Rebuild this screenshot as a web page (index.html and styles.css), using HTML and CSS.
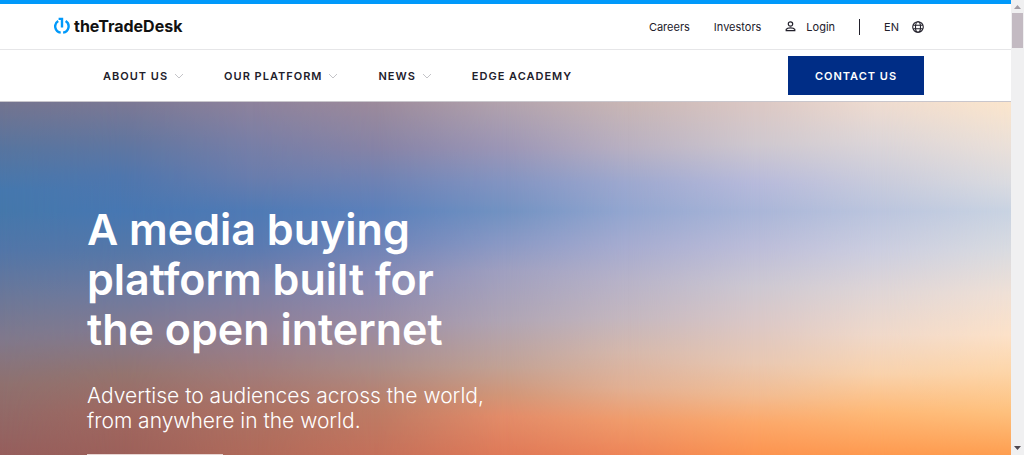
FILE: index.html
```html
<!DOCTYPE html>
<html lang="en">

<head>
    <meta charset="UTF-8">
    <meta name="viewport" content="width=device-width, initial-scale=1.0">
    <title>The Trade Desk</title>
    <link rel="stylesheet" href="styles.css">
</head>

<body>
    <div class="page">
        <header>
            <div class="top-bar">
                <a href="#" class="logo">
                    <svg width="16" height="18" viewBox="0 0 16 18" fill="none" stroke="#0099fa" stroke-width="2.4">
                        <path d="M4.2 4A6.3 6.3 0 0 0 6.7 15.6"/>
                        <path d="M11.6 4A6.3 6.3 0 0 1 9.1 15.6"/>
                        <path d="M4.6 1.9H8V10.6"/>
                    </svg>
                    <span>theTradeDesk</span>
                </a>
                <div class="top-links">
                    <a href="#">Careers</a>
                    <a href="#">Investors</a>
                    <a href="#" class="login">
                        <svg width="11" height="11" viewBox="0 0 11 11" fill="none" stroke="#22202b" stroke-width="1.2">
                            <circle cx="5.5" cy="3" r="2.2"/>
                            <path d="M1.2 9.6V8.4C2.4 6.3 8.6 6.3 9.8 8.4V9.6Z"/>
                        </svg>
                        Login
                    </a>
                    <span class="divider"></span>
                    <a href="#" class="lang">
                        EN
                        <svg width="12" height="12" viewBox="0 0 12 12" fill="none" stroke="#22202b" stroke-width="1.1">
                            <circle cx="6" cy="6" r="5.3"/>
                            <ellipse cx="6" cy="6" rx="2.5" ry="5.3"/>
                            <path d="M1.2 4.2H10.8M1.2 7.8H10.8"/>
                        </svg>
                    </a>
                </div>
            </div>
            <div class="main-bar">
                <nav>
                    <a href="#">ABOUT US <svg width="10" height="6" viewBox="0 0 10 6"><path d="M1 1L5 5L9 1"/></svg></a>
                    <a href="#">OUR PLATFORM <svg width="10" height="6" viewBox="0 0 10 6"><path d="M1 1L5 5L9 1"/></svg></a>
                    <a href="#">NEWS <svg width="10" height="6" viewBox="0 0 10 6"><path d="M1 1L5 5L9 1"/></svg></a>
                    <a href="#">EDGE ACADEMY</a>
                </nav>
                <button class="contact">CONTACT US</button>
            </div>
        </header>

        <main class="hero">
            <!-- sunset sky, each layer fades in over the one before it -->
            <div class="sky sky-1"></div>
            <div class="sky sky-2"></div>
            <div class="sky sky-3"></div>
            <div class="sky sky-4"></div>
            <div class="sky sky-5"></div>
            <div class="sky sky-6"></div>
            <div class="sky sky-7"></div>
            <div class="sky sky-8"></div>
            <div class="sky sky-9"></div>
            <div class="hero-text">
                <h1>A media buying<br>platform built for<br>the open internet</h1>
                <p>Advertise to audiences across the world,<br>from anywhere in the world.</p>
                <button class="hero-btn" aria-label="Contact us"></button>
            </div>
        </main>
    </div>

    <div class="scrollbar">
        <svg width="7" height="4" viewBox="0 0 7 4"><path d="M0 4L3.5 0L7 4Z" fill="#a39da5"/></svg>
        <div class="thumb"></div>
        <svg width="7" height="4" viewBox="0 0 7 4"><path d="M0 0L3.5 4L7 0Z" fill="#4d4851"/></svg>
    </div>
</body>
</html>
```

FILE: styles.css
```css
* {
    box-sizing: border-box;
}

body {
    margin: 0;
    display: flex;
    height: 100vh;
    overflow: hidden;
    font-family: Inter, "Liberation Sans", sans-serif;
    color: #22202b;
}

a {
    color: inherit;
    text-decoration: none;
}

.page {
    flex: 1;
    display: flex;
    flex-direction: column;
    overflow: hidden;
}

/* header */
.top-bar {
    display: flex;
    justify-content: space-between;
    align-items: center;
    height: 50px;
    padding: 0 87px 2px 54px;
    border-top: 4px solid #0099fa;
    border-bottom: 1px solid #e6e6e8;
}

.logo {
    display: flex;
    align-items: center;
    gap: 4px;
    font-size: 16px;
    font-weight: 700;
    color: #111;
}

.top-links {
    display: flex;
    align-items: center;
    gap: 24px;
    padding-top: 2px;
    font-size: 11px;
}

.login {
    display: flex;
    align-items: center;
    gap: 10px;
}

.lang {
    display: flex;
    align-items: center;
    gap: 13px;
}

.divider {
    width: 1px;
    height: 16px;
    background-color: #22202b;
}

.main-bar {
    display: flex;
    justify-content: space-between;
    align-items: center;
    height: 52px;
    padding: 0 87px 0 103px;
    border-bottom: 1px solid #c9c6cc;
}

nav {
    display: flex;
    gap: 40px;
    font-size: 11px;
    font-weight: 600;
    letter-spacing: 1px;
}

nav a {
    display: flex;
    align-items: center;
    gap: 6px;
}

nav svg {
    fill: none;
    stroke: #c4c4c8;
}

.contact {
    width: 136px;
    height: 39px;
    padding: 0;
    border: 0;
    background-color: #002d86;
    color: #fff;
    font-family: inherit;
    font-size: 11px;
    font-weight: 600;
    letter-spacing: 1px;
}

/* hero */
.hero {
    flex: 1;
    position: relative;
    overflow: hidden;
}

.sky {
    position: absolute;
    inset: 0;
}

.sky-1 {
    background: linear-gradient(#74748f 0, #58759f 13%, #4578ae 25%, #4578ab 31%, #5276a8 42%, #6d7898 56%, #80798c 67%, #8f716f 80%, #965e5c 100%);
}

.sky-2 {
    background: linear-gradient(#7b7894 0, #62769f 11%, #4f76ad 21%, #4777b2 31%, #5577a8 42%, #6e7a9f 54%, #827a90 65%, #94746f 77%, #a06860 88%, #9c605a 100%);
    mask-image: linear-gradient(90deg, transparent 0, #000 12%);
}

.sky-3 {
    background: linear-gradient(#8e829c 0, #7a7fa6 11%, #6a7dad 21%, #4f7ab5 31%, #5a7ab1 41%, #7a7fa6 52%, #927f95 65%, #a07c7c 76%, #ac7264 87%, #b06a5a 100%);
    mask-image: linear-gradient(90deg, transparent 12%, #000 25%);
}

.sky-4 {
    background: linear-gradient(#9c8a9b 0, #8683a6 13%, #6f82b3 22%, #5b80bb 31%, #6c83b8 40%, #8789b3 50%, #9a8ca4 63%, #aa8c88 75%, #bc7c66 87%, #c4705a 100%);
    mask-image: linear-gradient(90deg, transparent 25%, #000 37%);
}

.sky-5 {
    background: linear-gradient(#b3a3ad 0, #9c96b6 13%, #8294c2 23%, #7292c2 31%, #8a99c5 40%, #a0a0c0 48%, #b0a5b4 62%, #c2a295 75%, #d29678 83%, #e38c69 89%, #e07a58 100%);
    mask-image: linear-gradient(90deg, transparent 37%, #000 50%);
}

.sky-6 {
    background: linear-gradient(#c9b6b4 0, #b8b0c2 13%, #9da8cf 23%, #93a6d0 31%, #a7acd0 41%, #b8b3c8 51%, #c4b7bf 61%, #d6b8ab 71%, #e2b093 81%, #f09c6c 90%, #ee8558 100%);
    mask-image: linear-gradient(90deg, transparent 50%, #000 62%);
}

.sky-7 {
    background: linear-gradient(#dcc8c4 0, #cfc8cf 12%, #b7badb 23%, #aab6d8 31%, #bcbdd9 41%, #cdc8d2 52%, #dcc8c6 63%, #e9c8b2 74%, #f2bc92 83%, #fca86a 91%, #fc9450 100%);
    mask-image: linear-gradient(90deg, transparent 62%, #000 75%);
}

.sky-8 {
    background: linear-gradient(#efdcd0 0, #ddd6d8 11%, #c8cbdc 23%, #bbc5de 31%, #cccee0 42%, #e0d6d6 54%, #f0d9ca 66%, #f9d2ac 77%, #feb977 88%, #fe9a50 100%);
    mask-image: linear-gradient(90deg, transparent 75%, #000 87%);
}

.sky-9 {
    background: linear-gradient(#fbe5cc 0, #ebe0d8 12%, #dadbe0 23%, #c9d3e2 31%, #d9dbe0 42%, #efe0d6 54%, #fce1c8 66%, #fdd6aa 76%, #fec07d 88%, #fe9e50 100%);
    mask-image: linear-gradient(90deg, transparent 87%, #000 100%);
}

.hero-text {
    position: relative;
    padding: 102px 87px 0;
    color: #fff;
}

h1 {
    margin: 0;
    font-size: 43px;
    font-weight: 600;
    line-height: 50px;
}

p {
    margin: 29px 0 21px;
    font-size: 21px;
    font-weight: 300;
    line-height: 25px;
}

.hero-btn {
    display: block;
    width: 136px;
    height: 39px;
    border: 0;
    background-color: #e8d5d2;
}

/* scrollbar */
.scrollbar {
    display: flex;
    flex-direction: column;
    align-items: center;
    width: 13px;
    padding: 5px 1px;
    background-color: #f0f0f1;
}

.thumb {
    width: 100%;
    height: 35px;
    margin: 4px 0 auto;
    background-color: #c3bac2;
}
```
